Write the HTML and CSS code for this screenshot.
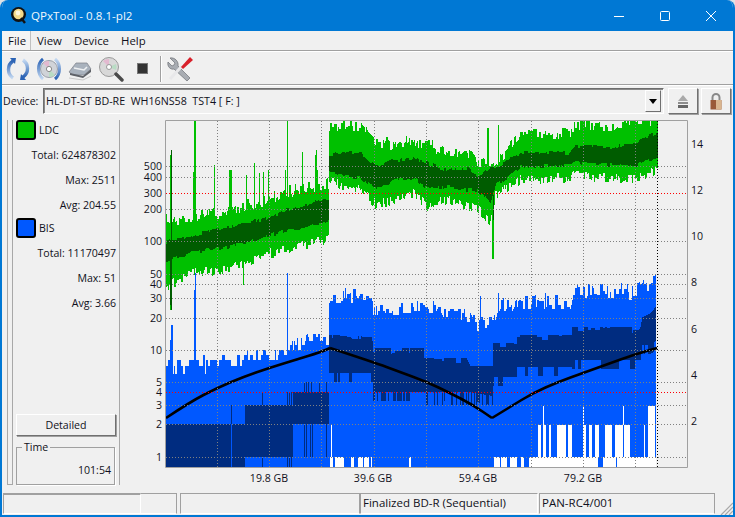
FILE: index.html
```html
<!DOCTYPE html>
<html lang="en">
<head>
<meta charset="utf-8">
<title>QPxTool - 0.8.1-pl2</title>
<link rel="stylesheet" href="styles.css">
</head>
<body>
<div class="window">
  <header class="titlebar">
    <svg class="appicon" width="18" height="20" viewBox="0 0 18 20">
      <circle cx="8.500" cy="8.500" r="7.500" fill="#111"/>
      <circle cx="8.500" cy="8" r="5.200" fill="#f4d98a"/>
      <circle cx="8" cy="7" r="2.400" fill="#fff6dc"/>
      <path d="M11 12l4 5" stroke="#111" stroke-width="2.400"/>
    </svg>
    <span class="titletext">QPxTool - 0.8.1-pl2</span>
    <span class="winbtns">
      <svg width="10" height="10" viewBox="0 0 10 10"><path d="M0 5.500h10" stroke="#fff"/></svg>
      <svg width="10" height="10" viewBox="0 0 10 10"><rect x=".5" y=".5" width="9" height="9" rx="1" fill="none" stroke="#fff"/></svg>
      <svg width="10" height="10" viewBox="0 0 10 10"><path d="M0 0l10 10M10 0L0 10" stroke="#fff"/></svg>
    </span>
  </header>
  <nav class="menubar">
    <span class="menuitem active">File</span>
    <span class="menuitem">View</span>
    <span class="menuitem">Device</span>
    <span class="menuitem">Help</span>
  </nav>
  <div class="toolbar">
    <svg class="tool" width="26" height="26" viewBox="0 0 26 26">
      <defs>
        <linearGradient id="arcA" x1="0" y1="0" x2="0" y2="1"><stop offset="0" stop-color="#2a62b4"/><stop offset="1" stop-color="#c3d8f1"/></linearGradient>
        <linearGradient id="arcB" x1="0" y1="0" x2="0" y2="1"><stop offset="0" stop-color="#c3d8f1"/><stop offset="1" stop-color="#2a62b4"/></linearGradient>
      </defs>
      <path d="M8 5C2 9 2 18 8 22" fill="none" stroke="url(#arcA)" stroke-width="3.400"/>
      <path d="M5 2l6 0-1 6z" fill="#2a62b4"/>
      <path d="M18 4c6 4 6 13 0 17" fill="none" stroke="url(#arcB)" stroke-width="3.400"/>
      <path d="M21 24l-6 0 1-6z" fill="#2a62b4"/>
    </svg>
    <svg class="tool" width="26" height="26" viewBox="0 0 26 26">
      <circle cx="13" cy="13" r="8.500" fill="#d0d3d8" stroke="#9aa0aa"/>
      <path d="M13 13L7 7a8 8 0 0 1 6-2z" fill="#e3b9d0"/>
      <path d="M13 13l6 6a8 8 0 0 1-6 2z" fill="#b9dcc4"/>
      <circle cx="13" cy="13" r="2.600" fill="#fff" stroke="#888"/>
      <path d="M7 3C1 8 1 18 7 23" fill="none" stroke="url(#arcA)" stroke-width="3"/>
      <path d="M19 3c6 5 6 15 0 20" fill="none" stroke="url(#arcB)" stroke-width="3"/>
    </svg>
    <svg class="tool" width="26" height="26" viewBox="0 0 26 26">
      <path d="M2 16L9 7h11l4 6-7 6H6z" fill="#a9b2bd" stroke="#7c8088" stroke-width=".7"/>
      <path d="M3 17l13 3 8-7v3l-8 6-13-3z" fill="#5f6268"/>
      <path d="M7 12l10 2 3-3" fill="none" stroke="#eef0f2" stroke-width="1.600"/>
      <path d="M2 22l14 2 8-4" fill="none" stroke="#c9c9c9" stroke-width="1"/>
    </svg>
    <svg class="tool" width="26" height="26" viewBox="0 0 26 26">
      <circle cx="11" cy="11" r="9.500" fill="#d8d8d8" stroke="#9a9a9a"/>
      <path d="M11 11L5 5a8.500 8.500 0 0 1 6-2z" fill="#e3b9d0"/>
      <path d="M11 11l7-3a8 8 0 0 1 0 6z" fill="#b9dcc4"/>
      <circle cx="11" cy="11" r="2.500" fill="#fff" stroke="#999"/>
      <path d="M18 18l6 6" stroke="#4a4a4a" stroke-width="3.400" stroke-linecap="round"/>
    </svg>
    <span class="stopwrap"><span class="stopicon"></span></span>
    <span class="toolsep"></span>
    <svg class="tool" width="26" height="26" viewBox="0 0 26 26">
      <path d="M3 2l5 5-1 2-2 1-4-4c-1 4 2 8 6 7l13 12 3-3L11 10c1-4-3-9-8-8z" fill="#a8acb2" stroke="#6d7076" stroke-width=".7"/>
      <path d="M3 23L15 10" stroke="#e8e8ea" stroke-width="3"/>
      <path d="M14 11l9-10 3 3-10 9z" fill="#d8202a"/>
    </svg>
  </div>
  <div class="devicebar">
    <span class="devicelabel">Device:</span>
    <div class="combo">
      <span class="combotext">HL-DT-ST BD-RE&nbsp; WH16NS58&nbsp; TST4 [ F: ]</span>
      <span class="comboarrow"><span class="arrowglyph"></span></span>
    </div>
    <button class="iconbtn" type="button" aria-label="Eject">
      <svg width="12" height="13" viewBox="0 0 12 13"><path d="M6 0l5 6H1z" fill="#a9a9a9"/><rect x="1" y="7" width="10" height="2" fill="#8c8c8c"/><rect x="1" y="10" width="10" height="3" fill="#666"/></svg>
    </button>
    <button class="iconbtn" type="button" aria-label="Lock">
      <svg width="14" height="17" viewBox="0 0 14 17"><path d="M3.500 8V4.500a3.500 3.500 0 0 1 7 0V8" fill="none" stroke="#8a8a8a" stroke-width="2"/><rect x="1.500" y="7" width="11" height="9.500" fill="#9a5a38"/><rect x="7" y="7" width="5.500" height="9.500" fill="#d9b58e"/></svg>
    </button>
  </div>
  <main class="mainarea">
    <aside class="sideouter">
      <div class="sliver"></div>
      <div class="sidepanel">
        <div class="legend"><span class="swatch green"></span>LDC</div>
        <div class="stat">Total: 624878302</div>
        <div class="stat">Max: 2511</div>
        <div class="stat">Avg: 204.55</div>
        <div class="legend"><span class="swatch blue"></span>BIS</div>
        <div class="stat">Total: 11170497</div>
        <div class="stat">Max: 51</div>
        <div class="stat">Avg: 3.66</div>
        <div class="spring"></div>
        <button class="detailed" type="button">Detailed</button>
        <fieldset class="timebox">
          <legend>Time</legend>
          <div class="timeval">101:54</div>
        </fieldset>
      </div>
    </aside>
    <section class="chart" id="chart">
      <canvas id="plot" class="plot" width="523" height="348"></canvas>
    </section>
  </main>
  <footer class="statusbar">
    <span class="cell c1a"></span>
    <span class="cell c1b"></span>
    <span class="cell c2"></span>
    <span class="cell c3">Finalized BD-R (Sequential)</span>
    <span class="cell c4">PAN-RC4/001</span>
    <svg class="grip" width="13" height="13" viewBox="0 0 13 13"><path d="M1 13L13 1M5 13l8-8M9 13l4-4" stroke="#a8a8a8" stroke-width="1.200"/></svg>
  </footer>
</div>
<script src="chart.js"></script>
</body>
</html>
```
FILE: styles.css
```css
* { box-sizing: border-box; }
html, body { margin: 0; height: 100%; background: #dfe3e6; overflow: hidden; }
body { font-family: "Open Sans", "Noto Sans", sans-serif; font-size: 10.6px; color: #101020; }
.window {
  width: 735px; height: 517px; display: flex; flex-direction: column;
  background: #f0f0f0; border: 2px solid #0078d4; border-top: 0;
  border-radius: 8px 8px 0 0; overflow: hidden; position: relative;
}
.titlebar {
  height: 31px; flex: none; background: #0078d4; color: #fff; display: flex; align-items: center;
  margin: 0 -2px; padding-left: 10px;
}
.appicon { flex: none; margin-top: 1px; }
.titletext { margin-left: 3px; font-size: 11.6px; color: #f2f8fc; }
.winbtns { margin-left: auto; display: flex; gap: 36px; padding-right: 19px; align-items: center; }
.menubar {
  height: 20px; flex: none; display: flex; align-items: center;
  border-bottom: 1px solid #a0a0a0; box-shadow: 0 1px 0 #fff; font-size: 11.4px;
}
.menuitem { padding: 0 6px; height: 19px; line-height: 19px; }
.menuitem.active { border-right: 1px solid #c0c0c0; background: #f4f4f4; padding: 0 4px 0 6px; }
.toolbar {
  height: 33px; flex: none; display: flex; align-items: center; padding: 1px 0 0 3px; gap: 5px;
  border-bottom: 1px solid #a0a0a0; box-shadow: 0 1px 0 #fff; margin-top: 1px;
}
.tool { flex: none; }
.stopwrap { width: 26px; display: flex; justify-content: center; }
.stopicon { width: 11px; height: 11px; background: #333; border: 1px solid #777; }
.toolsep { width: 1px; height: 26px; background: #a0a0a0; box-shadow: 1px 0 0 #fff; margin-right: 1px; }
.devicebar { height: 34px; flex: none; display: flex; align-items: center; padding: 0 2px 2px 1px; }
.devicelabel { width: 40px; flex: none; }
.combo {
  width: 621px; height: 26px; flex: none; display: flex; align-items: center; justify-content: space-between;
  border: 1px solid; border-color: #6e6e6e #fff #fff #6e6e6e; background: #f0f0f0;
  box-shadow: inset 1px 1px 0 #8a8a8a; padding: 0 2px; margin-right: 1px;
}
.combotext { font-size: 10.7px; white-space: pre; }
.comboarrow {
  width: 16px; height: 22px; background: #f0f0f0; display: flex; align-items: center; justify-content: center;
  border: 1px solid; border-color: #fff #707070 #707070 #fff;
}
.arrowglyph { width: 0; height: 0; border: 4px solid transparent; border-top: 5px solid #000; border-bottom: 0; }
.iconbtn {
  width: 30px; height: 26px; padding: 0; margin-left: 3px; flex: none; background: #f0f0f0;
  display: flex; align-items: center; justify-content: center;
  border: 1px solid; border-color: #fff #707070 #707070 #fff; box-shadow: 1px 1px 0 #a0a0a0;
}
.mainarea { flex: 1; display: flex; min-height: 0; padding-top: 1px; }
.sideouter { width: 113px; margin: 0 0 5px 5px; flex: none; display: flex; }
.sliver { width: 6px; flex: none; border: 1px solid #a8a8a8; border-top: 0; }
.sidepanel {
  flex: 1; display: flex; flex-direction: column; border-right: 1px solid #a8a8a8;
  padding: 0 3px; min-width: 0;
}
.legend { height: 20px; margin-bottom: 3px; display: flex; align-items: center; gap: 3px; flex: none; }
.swatch { width: 20px; height: 20px; border: 2px solid #000; border-radius: 3px; flex: none; }
.swatch.green { background: #00c000; }
.swatch.blue { background: #0058ff; }
.stat { text-align: right; height: 25px; line-height: 25px; flex: none; }
.spring { flex: 1; }
.detailed {
  height: 22px; width: 100px; flex: none; font: inherit; color: inherit; background: #f0f0f0; padding: 0;
  border: 1px solid; border-color: #fff #707070 #707070 #fff; box-shadow: 1px 1px 0 #a0a0a0;
}
.timebox {
  margin: 5px 0 0; padding: 0 3px 0 0; height: 44px; width: 99px; border: 1px solid #a0a0a0;
  box-shadow: 1px 1px 0 #fff; flex: none; min-width: 0;
}
.timebox legend { padding: 0 2px; margin-left: 5px; line-height: 12px; }
.timeval { text-align: right; line-height: 14px; margin-top: 10px; }
.chart { position: relative; flex: 1; }
.plot { position: absolute; left: 45px; top: 0; display: block; }
.axis { position: absolute; line-height: 12px; white-space: nowrap; }
.axis.left { right: 571px; text-align: right; }
.statusbar { height: 25px; flex: none; display: flex; position: relative; padding: 3px 0 1px 1px; }
.cell {
  height: 21px; border: 1px solid; border-color: #a0a0a0 #fff #fff #a0a0a0; line-height: 18px;
  padding-left: 2px; white-space: nowrap; flex: none; font-size: 11.5px;
}
.c1a { width: 138px; border-top-width: 2px; border-right-color: #fff; }
.c1b { width: 36px; border-left: 0; border-right-color: #a0a0a0; margin-right: 3px; }
.c2 { width: 180px; border-right-color: #a0a0a0; }
.c3 { width: 178px; }
.c4 { width: 176px; margin-left: 1px; border-right-color: #a0a0a0; }
.grip { position: absolute; right: 0; bottom: 0; }
```
FILE: chart.js
```js
(function () {
  var canvas = document.getElementById('plot');
  var chart = document.getElementById('chart');
  var ctx = canvas.getContext('2d');
  var OX = 165, OY = 120, W = 523, H = 348;
  var seed = 12345;
  function rnd() { seed = (seed * 1664525 + 1013904223) >>> 0; return seed / 4294967296; }
  function interp(pts, x) {
    if (x <= pts[0][0]) return pts[0].slice(1);
    for (var i = 1; i < pts.length; i++) {
      if (x <= pts[i][0]) {
        var a = pts[i - 1], b = pts[i], t = (x - a[0]) / (b[0] - a[0] || 1), r = [];
        for (var k = 1; k < a.length; k++) r.push(a[k] + (b[k] - a[k]) * t);
        return r;
      }
    }
    return pts[pts.length - 1].slice(1);
  }
  function fill(col, x0, x1, y0, y1) {
    ctx.fillStyle = col;
    ctx.fillRect(x0 - OX, Math.round(y0) - OY, x1 - x0, Math.round(y1) - Math.round(y0));
  }
  // A value that holds for a few columns, so the noise is chunky as in the source plot.
  function held(maxLen, gen) {
    var left = 0, val = 0;
    return function () {
      if (left <= 0) { val = gen(); left = 1 + Math.floor(rnd() * maxLen); }
      left--;
      return val;
    };
  }

  // x, light top, light bottom, dark top, dark bottom
  var ldc = [
    [166,222,285,242,262],[193,218,272,235,252],[227,212,268,227,247],[260,203,255,220,238],
    [287,193,248,210,230],[328,185,238,198,222],[329,127,180,155,173],[360,126,190,152,178],
    [375,145,203,165,188],[397,145,200,160,180],[413,142,193,158,178],[427,145,205,163,188],
    [447,155,198,170,187],[467,152,205,168,190],[477,165,208,177,190],[490,165,222,168,203],
    [495,167,193,168,185],[507,152,187,160,177],[520,135,178,153,167],[570,135,177,153,165],
    [575,127,174,146,163],[610,127,177,147,165],[637,122,177,142,165],[657,120,170,132,157]
  ];
  var spikesUp = {170:155,171:178,193:172,194:120,195:120,214:165,229:170,230:170,231:170,
    246:175,254:163,259:173,263:172,268:170,285:170,287:120,302:152,315:155,316:150,317:170,327:178,
    487:128,488:128,498:125};
  var spikesDown = {170:310,171:310,195:268,243:285,492:259,493:259};
  var topN = held(2, function () { return (rnd() - .6) * 13; });
  var botN = held(2, function () { return (rnd() - .4) * 11; });
  var dtN = held(4, function () { return (rnd() - .5) * 4; });
  var dbN = held(4, function () { return (rnd() - .5) * 4; });
  var x;
  for (x = 166; x <= 657; x++) {
    var v = interp(ldc, x);
    var t = v[0] + topN();
    var b = v[1] + botN();
    if (spikesUp[x]) t = spikesUp[x];
    if (spikesDown[x]) b = spikesDown[x];
    if (t < 121) t = 121;
    fill('#00c000', x, x + 1, t, b);
    fill('#005c00', x, x + 1, v[2] + dtN(), v[3] + dbN());
  }
  fill('#005c00', 171, 172, 150, 310);
  fill('#005c00', 170, 171, 240, 305);
  fill('#005c00', 493, 494, 195, 220);

  // BIS: the values are whole numbers on a log scale
  function yOf(value) { return 458 - 108.3 * Math.log(value) / Math.LN10; }
  function valOf(y) { return Math.pow(10, (458 - y) / 108.3); }
  var bisTop = [
    [166,366],[193,366],[227,362],[260,358],[287,354],[288,346],[328,340],[329,298],
    [372,296],[373,309],[440,309],[443,316],[470,316],[473,323],[493,323],[497,309],[517,303],
    [570,303],[573,291],[633,293],[645,286],[657,280]
  ];
  var bisSpike = {170:340,171:325,172:325,194:290,195:273,287:273,297:338,301:338,306:335,345:288,350:293,
    376:306,412:303,433:301,480:296,498:293,502:300,545:293,576:288,621:283};
  var factor = held(3, function () { return 1 + (rnd() - .4) * .34; });
  for (x = 166; x <= 655; x++) {
    var ty = interp(bisTop, x)[0];
    var yy = yOf(Math.max(1, Math.round(valOf(ty) * factor())));
    if (bisSpike[x]) yy = bisSpike[x];
    fill('#0058ff', x, x + 1, yy, 467);
  }

  // Dark blue band of BIS
  var DB = '#002c80';
  function band(x0, x1, y0, y1) { fill(DB, x0, x1, y0, y1); }
  band(166, 231, 424, 467);
  band(232, 245, 424, 467);
  band(231, 232, 405, 424);
  band(245, 293, 424, 457);
  band(245, 329, 405, 424);
  band(293, 329, 392, 405);
  [262, 287, 289, 291].forEach(function (p) { band(p, p + 1, 392, 405); band(p, p + 1, 457, 467); });
  [304, 306, 308, 311, 319, 326].forEach(function (p) { band(p, p + 1, 382, 392); });
  [304, 306, 310, 312, 326].forEach(function (p) { band(p, p + 1, 424, 457); });

  var dark = [
    [329,335,373],[372,337,373],[373,348,392],[423,348,392],[424,358,392],[466,358,392],
    [470,366,392],[492,366,396],[493,343,377],[516,343,377],[517,335,367],[571,335,367],
    [572,327,360],[640,327,360],[642,317,345],[650,313,345],[657,305,340]
  ];
  var topJ = held(7, function () { return rnd() < .3 ? 6 * rnd() : 0; });
  var botJ = held(5, function () { return rnd() < .25 ? 9 : 0; });
  for (x = 329; x <= 655; x++) {
    var d = interp(dark, x);
    var bt = d[1] + botJ();
    if (x > 424 && x < 493 && rnd() < .3) bt = 405;
    band(x, x + 1, d[0] + topJ(), bt);
  }

  // White gaps at the lowest values
  function gap(x0, x1, y0, y1) { fill('#fff', x0, x1, y0, y1); }
  gap(331, 332, 425, 458);
  function chunks(from, to, y0, y1, pWhite, maxW) {
    var px = from;
    while (px <= to) {
      var w = 1 + Math.floor(rnd() * maxW);
      if (rnd() < pWhite) gap(px, Math.min(px + w, to + 1), y0, y1);
      px += w;
    }
  }
  chunks(330, 373, 457, 467, .6, 3);
  gap(409, 411, 457, 467);
  chunks(494, 528, 457, 467, .7, 3);
  chunks(529, 655, 457, 467, .9, 6);
  chunks(523, 655, 425, 457, .38, 3);
  [543, 583, 623].forEach(function (p) { gap(p, p + 1, 406, 425); });
  gap(648, 655, 406, 457);

  // Speed curve: three smooth runs, sharp at the two corners
  var runs = [
    [[166,418],[190,402],[217,388],[243,377],[269,368],[295,360],[321,352],[330,348]],
    [[330,348],[373,362],[400,372],[427,382],[450,393],[473,405],[492,418]],
    [[492,418],[510,407],[533,393],[558,382],[583,373],[608,364],[633,355],[657,348]]
  ];
  ctx.strokeStyle = '#000'; ctx.lineWidth = 2.6; ctx.lineJoin = 'round';
  ctx.beginPath();
  runs.forEach(function (run) {
    ctx.moveTo(run[0][0] - OX, run[0][1] - OY);
    for (var i = 1; i < run.length - 1; i++) {
      var mx = (run[i][0] + run[i + 1][0]) / 2, my = (run[i][1] + run[i + 1][1]) / 2;
      ctx.quadraticCurveTo(run[i][0] - OX, run[i][1] - OY, mx - OX, my - OY);
    }
    var e = run[run.length - 1];
    ctx.lineTo(e[0] - OX, e[1] - OY);
  });
  ctx.stroke();

  // Dotted grid
  function hline(y, col) {
    ctx.fillStyle = col;
    for (var px = 1; px < W - 1; px += 3) ctx.fillRect(px, y - OY, 1, 1);
  }
  function vline(xp, col) {
    ctx.fillStyle = col;
    for (var py = 1; py < H - 1; py += 3) ctx.fillRect(xp - OX, py, 1, 1);
  }
  var gridCol = '#808080';
  var leftAxis = [[500,166],[400,177],[300,193],[200,209],[100,241],[50,274],[40,284],[30,298],[20,318],[10,350],[5,382],[4,392],[3,405],[2,424],[1,457]];
  leftAxis.forEach(function (a) {
    hline(a[1], (a[0] === 300 || a[0] === 4) ? '#ff0000' : gridCol);
  });
  [217, 269, 321, 374, 426, 478, 531, 583, 635].forEach(function (g) { vline(g, gridCol); });
  vline(657, '#000');
  ctx.strokeStyle = '#a0a0a0'; ctx.lineWidth = 1;
  ctx.strokeRect(.5, .5, W - 1, H - 1);

  // Axis labels; the chart section starts at x=120, y=120
  var CX = 120, CY = 120;
  function label(text, x, y, cls, anchor) {
    var el = document.createElement('span');
    el.className = 'axis ' + cls;
    el.textContent = text;
    el.style.top = (y - CY - 6) + 'px';
    if (anchor === 'center') { el.style.left = (x - CX) + 'px'; el.style.transform = 'translateX(-50%)'; }
    else if (anchor === 'left') { el.style.left = (x - CX) + 'px'; }
    chart.appendChild(el);
  }
  leftAxis.forEach(function (a) { label(String(a[0]), 0, a[1], 'left', 'right'); });
  [[14,144],[12,190],[10,236],[8,282],[6,329],[4,375],[2,421]].forEach(function (r) { label(String(r[0]), 691, r[1], 'right', 'left'); });
  [['19.8 GB',269],['39.6 GB',373],['59.4 GB',478],['79.2 GB',583]].forEach(function (g) { label(g[0], g[1], 478, 'bottom', 'center'); });
})();
```
